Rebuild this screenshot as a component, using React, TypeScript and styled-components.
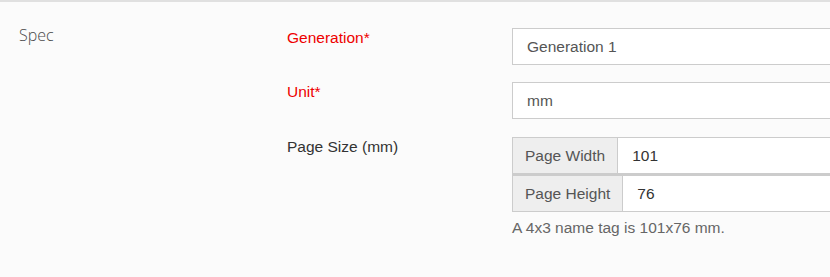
import * as React from "react"
import styled, { createGlobalStyle } from "styled-components"

const GlobalStyle = createGlobalStyle`
  html, body {
    margin: 0;
    padding: 0;
    background: #fbfbfb;
    overflow: hidden;
  }
`

const Section = styled.section`
  display: grid;
  grid-template-columns: 268px 225px 600px;
  width: 1200px;
  padding: 26px 0 30px 19px;
  border-top: 2px solid #e0e0e0;
  font-family: Arial, "Liberation Sans", sans-serif;
  font-size: 15.5px;
  color: #333;
`

const SectionTitle = styled.h3`
  margin: -3px 0 0;
  font-family: "Open Sans", sans-serif;
  font-weight: 300;
  font-size: 16px;
  line-height: 20px;
  color: #4a4a4a;
  grid-row: span 3;
`

const Label = styled.label<{ $required?: boolean }>`
  line-height: 20px;
  color: ${p => (p.$required ? "#ee0000" : "#333")};
`

const Field = styled.div<{ $gap?: number }>`
  margin-bottom: ${p => p.$gap ?? 17}px;
`

const TextInput = styled.input`
  box-sizing: border-box;
  display: block;
  width: 100%;
  height: 37px;
  padding: 0 14px;
  border: 1px solid #cccccc;
  background: #fff;
  font: inherit;
  color: #555;
`

const InputGroup = styled.div`
  display: flex;
  border: 1px solid #cccccc;
  height: 35px;
  & + & {
    border-top-width: 2px;
  }
`

const Addon = styled.span`
  display: flex;
  align-items: center;
  padding: 0 12px;
  background: #eeeeee;
  border-right: 1px solid #cccccc;
  color: #555;
`

const GroupInput = styled.input`
  flex: 1;
  border: 0;
  padding: 0 14px;
  background: #fff;
  font: inherit;
  color: #333;
  outline: none;
`

const HelpText = styled.p`
  margin: 6px 0 0;
  color: #666;
  line-height: 20px;
`

export default function App() {
  return (
    <>
      <GlobalStyle />
      <Section>
        <SectionTitle>Spec</SectionTitle>

        <Label $required>Generation*</Label>
        <Field>
          <TextInput defaultValue="Generation 1" />
        </Field>

        <Label $required>Unit*</Label>
        <Field $gap={18}>
          <TextInput defaultValue="mm" />
        </Field>

        <Label>Page Size (mm)</Label>
        <Field $gap={0}>
          <InputGroup>
            <Addon>Page Width</Addon>
            <GroupInput defaultValue="101" />
          </InputGroup>
          <InputGroup>
            <Addon>Page Height</Addon>
            <GroupInput defaultValue="76" />
          </InputGroup>
          <HelpText>A 4x3 name tag is 101x76 mm.</HelpText>
        </Field>
      </Section>
    </>
  )
}
